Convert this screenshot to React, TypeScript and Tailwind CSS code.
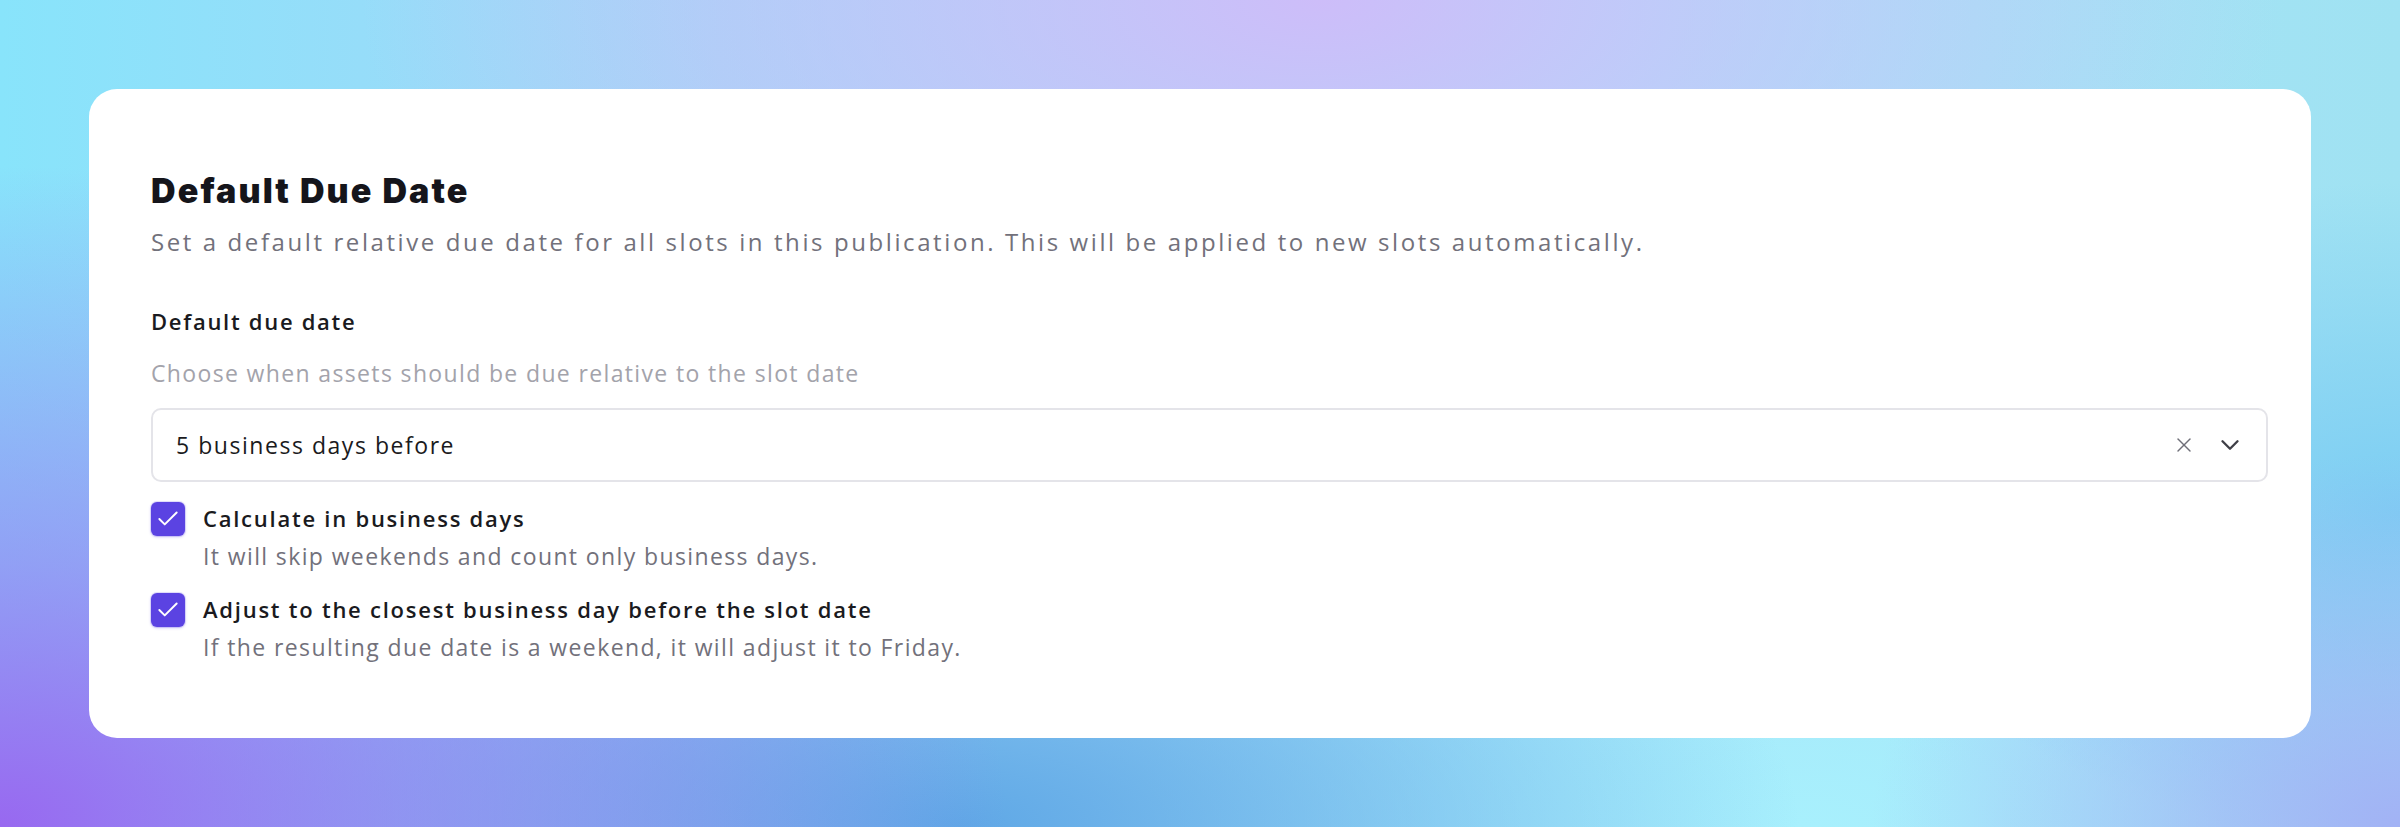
import { Check, ChevronDown, X } from 'lucide-react';

// Types
type Option = {
  label: string;
  hint: string;
  checked: boolean;
};

// Configuration
const OPTIONS: Option[] = [
  {
    label: 'Calculate in business days',
    hint: 'It will skip weekends and count only business days.',
    checked: true,
  },
  {
    label: 'Adjust to the closest business day before the slot date',
    hint: 'If the resulting due date is a weekend, it will adjust it to Friday.',
    checked: true,
  },
];

const BODY_FONT = "font-['Open_Sans',sans-serif]";

export default function App() {
  return (
    <div className="min-h-[827px] w-full bg-[radial-gradient(ellipse_42%_80%_at_0%_100%,#9868f0_0%,rgba(152,104,240,0.55)_40%,rgba(152,104,240,0)_100%),radial-gradient(ellipse_40%_55%_at_55%_0%,#cdbdf9_0%,rgba(205,189,249,0)_100%),radial-gradient(ellipse_22%_45%_at_100%_100%,#a2b2f5_0%,rgba(162,178,245,0)_100%),radial-gradient(ellipse_35%_45%_at_40%_100%,#5fa8e6_0%,rgba(95,168,230,0)_100%),radial-gradient(ellipse_22%_40%_at_100%_62%,#7ccdf3_0%,rgba(124,205,243,0)_100%),radial-gradient(ellipse_30%_40%_at_75%_100%,#a8f0fd_0%,rgba(168,240,253,0)_100%),linear-gradient(90deg,#88e4fb_0%,#a4d6f7_30%,#a8e4fa_65%,#a0e2f2_100%)] p-[89px]">
      <SettingsCard />
    </div>
  );
}

function SettingsCard() {
  return (
    <div className="flex h-[649px] flex-col rounded-[28px] bg-white pt-[82px] pr-[43px] pl-[62px]">
      {/* Header */}
      <h2 className="font-['Inter',sans-serif] text-[34px] leading-[40px] font-black tracking-[0.062em] text-[#15151b]">
        Default Due Date
      </h2>
      <p className={`${BODY_FONT} mt-4 text-[24px] leading-[30px] tracking-[0.108em] text-[#72717b]`}>
        Set a default relative due date for all slots in this publication. This will be applied to new slots
        automatically.
      </p>

      {/* Field */}
      <label className={`${BODY_FONT} mt-[50px] text-[22px] leading-[28px] font-semibold tracking-[0.078em] text-[#1a1a20]`}>
        Default due date
      </label>
      <p className={`${BODY_FONT} mt-6 text-[23px] leading-[28px] tracking-[0.059em] text-[#a3a3ab]`}>
        Choose when assets should be due relative to the slot date
      </p>

      <div className="mt-[21px] flex h-[74px] items-center rounded-[10px] border-2 border-[#e4e4e9] pr-[21px] pl-[23px]">
        <span className={`${BODY_FONT} flex-1 text-[23px] leading-[28px] tracking-[0.067em] text-[#1a1a20]`}>
          5 business days before
        </span>
        <X className="text-[#6f6f78]" size={24} strokeWidth={1.4} />
        <ChevronDown className="ml-[19px] text-[#3f3f46]" size={30} strokeWidth={1.9} />
      </div>

      {/* Options */}
      <div className="mt-[20px] flex flex-col gap-[23px]">
        {OPTIONS.map((opt) => (
          <OptionRow key={opt.label} option={opt} />
        ))}
      </div>
    </div>
  );
}

function OptionRow({ option }: { option: Option }) {
  const { label, hint, checked } = option;

  return (
    <div className="flex items-start gap-[18px]">
      <span
        className={`flex h-[34px] w-[34px] shrink-0 items-center justify-center rounded-[6px] shadow-[0_0_0_1px_rgba(90,65,227,0.15),0_1px_3px_rgba(90,65,227,0.3)] ${
          checked ? 'bg-[#5b43e2]' : 'bg-white'
        }`}
      >
        {checked && <Check className="text-white" size={26} strokeWidth={1.8} />}
      </span>
      <div className="mt-[2px] flex flex-col">
        <span className={`${BODY_FONT} text-[22px] leading-[28px] font-semibold tracking-[0.08em] text-[#1a1a20]`}>
          {label}
        </span>
        <span className={`${BODY_FONT} mt-[10px] text-[23px] leading-[28px] tracking-[0.06em] text-[#72717b]`}>
          {hint}
        </span>
      </div>
    </div>
  );
}
